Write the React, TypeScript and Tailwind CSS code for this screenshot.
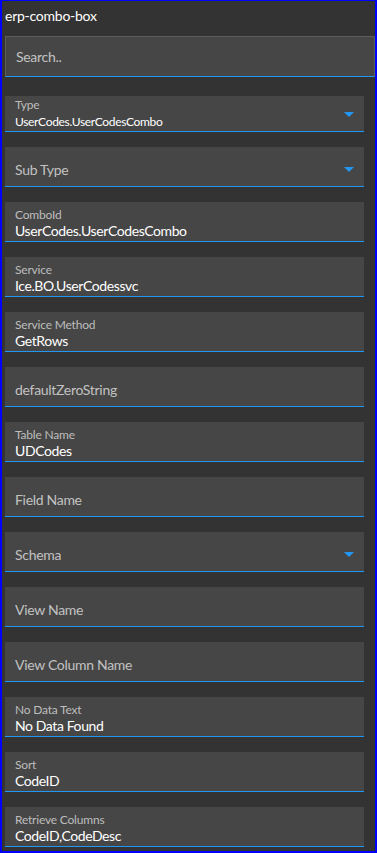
import React from "react";

type F = { label?: string; value?: string; placeholder?: string; dropdown?: boolean; compact?: boolean };

const fields: F[] = [
  { label: "Type", value: "UserCodes.UserCodesCombo", dropdown: true, compact: true },
  { placeholder: "Sub Type", dropdown: true },
  { label: "ComboId", value: "UserCodes.UserCodesCombo" },
  { label: "Service", value: "Ice.BO.UserCodessvc" },
  { label: "Service Method", value: "GetRows" },
  { placeholder: "defaultZeroString" },
  { label: "Table Name", value: "UDCodes" },
  { placeholder: "Field Name" },
  { placeholder: "Schema", dropdown: true },
  { placeholder: "View Name" },
  { placeholder: "View Column Name" },
  { label: "No Data Text", value: "No Data Found" },
  { label: "Sort", value: "CodeID" },
  { label: "Retrieve Columns", value: "CodeID,CodeDesc" },
];

function Arrow({ top }: { top: string }) {
  return (
    <svg className={`absolute right-[10px] ${top}`} width="10" height="5" viewBox="0 0 10 5">
      <polygon points="0,0 10,0 5,5" fill="#2196f3" />
    </svg>
  );
}

function Field({ f }: { f: F }) {
  if (f.compact) {
    return (
      <div className="relative h-[36px] bg-[#464646] border-b border-[#2196f3] pl-[10px]">
        <div className="pt-[2px] text-[12px] leading-[14px] text-[#bdbdbd] tracking-[-0.2px]">{f.label}</div>
        <div className="mt-[2px] text-[12px] leading-[16px] text-white tracking-[-0.33px]">{f.value}</div>
        {f.dropdown && <Arrow top="top-[16px]" />}
      </div>
    );
  }
  if (f.placeholder) {
    return (
      <div className="relative h-[40px] bg-[#464646] border-b border-[#2196f3] pl-[10px]">
        <div className="pt-[13px] text-[14px] leading-[20px] text-[#c2c2c2] tracking-[-0.3px]">{f.placeholder}</div>
        {f.dropdown && <Arrow top="top-[20px]" />}
      </div>
    );
  }
  return (
    <div className="relative h-[40px] bg-[#464646] border-b border-[#2196f3] pl-[10px]">
      <div className="pt-[6px] text-[12px] leading-[14px] text-[#bdbdbd] tracking-[-0.2px]">{f.label}</div>
      <div className="text-[14px] leading-[18px] text-white tracking-[-0.4px]">{f.value}</div>
    </div>
  );
}

export default function App() {
  return (
    <div
      className="h-[853px] overflow-hidden bg-[#333333] border-t border-l-2 border-r-2 border-b-2 border-[#0000ff] pl-[3px] pr-0"
      style={{ fontFamily: "Lato, 'Liberation Sans', sans-serif" }}
    >
      <div className="pt-[5px] pl-0 text-[14px] leading-[20px] text-white tracking-[-0.25px]">erp-combo-box</div>
      <div className="mt-[10px] h-[41px] bg-[#464646] border-t border-l border-r border-[#5c5c5c] border-b border-b-[#2196f3] flex items-center pl-[10px] text-[14px] text-[#c2c2c2] tracking-[-0.3px]">
        Search..
      </div>
      <div className="mt-[19px] mr-[11px] flex flex-col gap-[15px]">
        {fields.map((f, i) => (
          <Field key={i} f={f} />
        ))}
      </div>
    </div>
  );
}
